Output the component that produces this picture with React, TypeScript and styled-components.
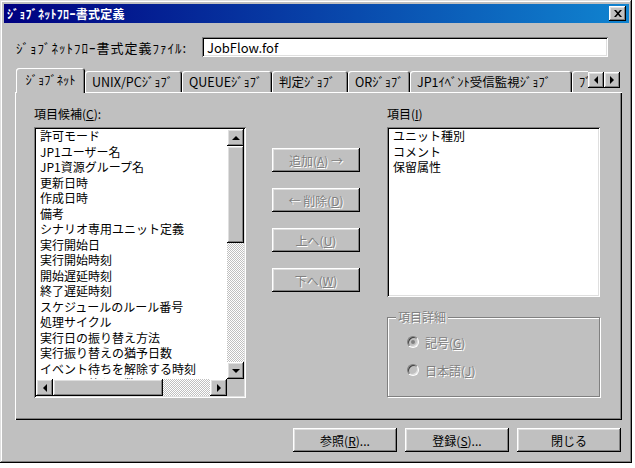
import styled, { createGlobalStyle, css } from "styled-components"

const GlobalStyle = createGlobalStyle`
  html, body {
    margin: 0;
    padding: 0;
    background: #fff;
  }
  body {
    font-family: "Noto Sans CJK JP", "Noto Sans", sans-serif;
    font-size: 12px;
    color: #000;
  }
  #root {
    width: 635px;
    height: 468px;
  }
`

const raised = css`
  background: #c0c0c0;
  box-shadow:
    inset -1px -1px #000,
    inset 1px 1px #fff,
    inset -2px -2px #808080,
    inset 2px 2px #dfdfdf;
`

const sunken = css`
  box-shadow:
    inset 1px 1px #808080,
    inset -1px -1px #fff,
    inset 2px 2px #000,
    inset -2px -2px #dfdfdf;
`

const disabledText = css`
  color: #808080;
  text-shadow: 1px 1px 0 #fff;
`

const Window = styled.div`
  width: 632px;
  height: 463px;
  box-sizing: border-box;
  padding: 4px 3px 3px 4px;
  display: flex;
  flex-direction: column;
  background: #c0c0c0;
  box-shadow:
    inset -1px -1px #000,
    inset 1px 1px #dfdfdf,
    inset -2px -2px #808080,
    inset 2px 2px #fff;
`

const TitleBar = styled.div`
  height: 19px;
  display: flex;
  align-items: center;
  justify-content: space-between;
  padding: 0 3px 0 3px;
  background: linear-gradient(to right, #000080, #1084d0);
  color: #fff;
  font-weight: bold;
  font-size: 12px;
  letter-spacing: 0.3px;
`

const CloseButton = styled.div`
  width: 17px;
  height: 15px;
  display: flex;
  align-items: center;
  justify-content: center;
  ${raised}
`

const FileRow = styled.div`
  display: flex;
  align-items: center;
  margin-top: 14px;
  padding-left: 12px;
`

const FileLabel = styled.span`
  width: 186px;
  font-size: 13px;
  letter-spacing: 1px;
  white-space: nowrap;
`

const TextInput = styled.div`
  width: 406px;
  height: 20px;
  box-sizing: border-box;
  padding: 0 5px;
  display: flex;
  align-items: center;
  background: #fff;
  font-size: 13px;
  ${sunken}
`

const TabStrip = styled.div`
  display: flex;
  height: 25px;
  margin: 11px 0 -1px 12px;
  position: relative;
  z-index: 1;
`

const TabsViewport = styled.div`
  width: 572px;
  display: flex;
  align-items: flex-end;
  overflow: hidden;
`

const Tab = styled.div<{ $w: number; $active?: boolean }>`
  flex: none;
  width: ${(p) => p.$w}px;
  height: ${(p) => (p.$active ? 25 : 21)}px;
  margin-bottom: ${(p) => (p.$active ? 0 : 1)}px;
  box-sizing: border-box;
  display: flex;
  align-items: center;
  justify-content: ${(p) => (p.$active ? "center" : "flex-start")};
  padding: ${(p) => (p.$active ? "0 0 3px" : "0 0 0 7px")};
  white-space: nowrap;
  font-size: 12.5px;
  background: #c0c0c0;
  border-radius: 3px 3px 0 0;
  box-shadow:
    inset 1px 1px #fff,
    inset -1px 0 #000,
    inset -2px 0 #808080;
`

const TabScroll = styled.div`
  display: flex;
  margin-top: 4px;
`

const SmallButton = styled.div<{ $w: number; $h: number }>`
  width: ${(p) => p.$w}px;
  height: ${(p) => p.$h}px;
  flex: none;
  display: flex;
  align-items: center;
  justify-content: center;
  ${raised}
`

const Arrow = styled.span<{ $dir: "up" | "down" | "left" | "right" }>`
  width: 0;
  height: 0;
  border-style: solid;
  ${(p) =>
    p.$dir === "up"
      ? css`border-width: 0 4px 4px 4px; border-color: transparent transparent #000 transparent;`
      : p.$dir === "down"
        ? css`border-width: 4px 4px 0 4px; border-color: #000 transparent transparent transparent;`
        : p.$dir === "left"
          ? css`border-width: 4px 4px 4px 0; border-color: transparent #000 transparent transparent;`
          : css`border-width: 4px 0 4px 4px; border-color: transparent transparent transparent #000;`}
`

const Panel = styled.div`
  width: 607px;
  height: 328px;
  margin-left: 11px;
  box-sizing: border-box;
  padding: 14px 22px 0 19px;
  display: flex;
  box-shadow:
    inset 1px 1px #fff,
    inset -1px -1px #000,
    inset -2px -2px #808080;
`

const Column = styled.div<{ $w: number; $ml?: number }>`
  width: ${(p) => p.$w}px;
  margin-left: ${(p) => p.$ml ?? 0}px;
  display: flex;
  flex-direction: column;
`

const FieldLabel = styled.div`
  height: 16px;
  line-height: 16px;
  margin-bottom: 5px;
  white-space: nowrap;
`

const ListBox = styled.div<{ $h: number; $scroll?: boolean }>`
  height: ${(p) => p.$h}px;
  box-sizing: border-box;
  padding: 2px;
  background: #fff;
  display: grid;
  grid-template-columns: ${(p) => (p.$scroll ? "1fr 17px" : "1fr")};
  grid-template-rows: ${(p) => (p.$scroll ? "1fr 17px" : "1fr")};
  ${sunken}
`

const ListItems = styled.div`
  overflow: hidden;
  padding-left: 4px;
  margin-top: -1px;
`

const ListItem = styled.div`
  line-height: 15.5px;
  white-space: nowrap;
`

const VScroll = styled.div`
  display: flex;
  flex-direction: column;
`

const HScroll = styled.div`
  display: flex;
`

const Track = styled.div<{ $vertical?: boolean }>`
  flex: 1;
  display: flex;
  flex-direction: ${(p) => (p.$vertical ? "column" : "row")};
  background: repeating-conic-gradient(#c0c0c0 0 25%, #fff 0 50%) 0 0 / 2px 2px;
`

const Thumb = styled.div<{ $w?: number; $h?: number }>`
  flex: none;
  width: ${(p) => (p.$w ? `${p.$w}px` : "100%")};
  height: ${(p) => (p.$h ? `${p.$h}px` : "100%")};
  ${raised}
`

const Corner = styled.div`
  background: #c0c0c0;
`

const ActionColumn = styled.div`
  width: 88px;
  margin-left: 26px;
  padding-top: 42px;
  display: flex;
  flex-direction: column;
  gap: 16px;
`

const PushButton = styled.div<{ $w: number; $disabled?: boolean }>`
  width: ${(p) => p.$w}px;
  height: 24px;
  flex: none;
  display: flex;
  align-items: center;
  justify-content: center;
  white-space: nowrap;
  ${raised}
  ${(p) => p.$disabled && disabledText}
`

const GroupBox = styled.div`
  height: 80px;
  margin-top: 20px;
  box-sizing: border-box;
  border: 1px solid #808080;
  box-shadow:
    inset 1px 1px #fff,
    1px 1px #fff;
  display: flex;
  flex-direction: column;
`

const GroupLegend = styled.span`
  align-self: flex-start;
  margin: -9px 0 0 8px;
  padding: 0 2px;
  line-height: 16px;
  background: #c0c0c0;
  ${disabledText}
`

const RadioRow = styled.div<{ $mt: number }>`
  display: flex;
  align-items: center;
  gap: 6px;
  margin: ${(p) => p.$mt}px 0 0 19px;
  height: 16px;
  ${disabledText}
`

const RadioCircle = styled.span<{ $checked?: boolean }>`
  width: 12px;
  height: 12px;
  box-sizing: border-box;
  border-radius: 50%;
  border: 1px solid;
  border-color: #808080 #fff #fff #808080;
  box-shadow:
    inset 1px 1px #404040,
    inset -1px -1px #dfdfdf;
  background: #c0c0c0;
  display: flex;
  align-items: center;
  justify-content: center;
  &::after {
    content: "";
    width: 4px;
    height: 4px;
    border-radius: 50%;
    background: ${(p) => (p.$checked ? "#808080" : "transparent")};
  }
`

const Footer = styled.div`
  display: flex;
  justify-content: flex-end;
  gap: 8px;
  margin-top: 8px;
  padding-right: 8px;
`

const CANDIDATES = [
  "許可モード",
  "JP1ユーザー名",
  "JP1資源グループ名",
  "更新日時",
  "作成日時",
  "備考",
  "シナリオ専用ユニット定義",
  "実行開始日",
  "実行開始時刻",
  "開始遅延時刻",
  "終了遅延時刻",
  "スケジュールのルール番号",
  "処理サイクル",
  "実行日の振り替え方法",
  "実行振り替えの猶予日数",
  "イベント待ちを解除する時刻",
  "イベント待ち回数",
]

const SELECTED = ["ユニット種別", "コメント", "保留属性"]

const TABS = [
  { label: "ｼﾞｮﾌﾞﾈｯﾄ", w: 69, active: true },
  { label: "UNIX/PCｼﾞｮﾌﾞ", w: 97 },
  { label: "QUEUEｼﾞｮﾌﾞ", w: 90 },
  { label: "判定ｼﾞｮﾌﾞ", w: 76 },
  { label: "ORｼﾞｮﾌﾞ", w: 62 },
  { label: "JP1ｲﾍﾞﾝﾄ受信監視ｼﾞｮﾌﾞ", w: 162 },
  { label: "ﾌﾞﾘｯｼﾞ", w: 80 },
]

function App() {
  return (
    <>
      <GlobalStyle />
      <Window>
        <TitleBar>
          <span>ｼﾞｮﾌﾞﾈｯﾄﾌﾛｰ書式定義</span>
          <CloseButton>
            <svg width="8" height="7" viewBox="0 0 8 7">
              <path d="M0 0h2l2 2.2L6 0h2L5 3.5 8 7H6L4 4.8 2 7H0l3-3.5z" fill="#000" />
            </svg>
          </CloseButton>
        </TitleBar>

        <FileRow>
          <FileLabel>ｼﾞｮﾌﾞﾈｯﾄﾌﾛｰ書式定義ﾌｧｲﾙ:</FileLabel>
          <TextInput>JobFlow.fof</TextInput>
        </FileRow>

        <TabStrip>
          <TabsViewport>
            {TABS.map((t) => (
              <Tab key={t.label} $w={t.w} $active={t.active}>
                {t.label}
              </Tab>
            ))}
          </TabsViewport>
          <TabScroll>
            <SmallButton $w={16} $h={16}>
              <Arrow $dir="left" />
            </SmallButton>
            <SmallButton $w={16} $h={16}>
              <Arrow $dir="right" />
            </SmallButton>
          </TabScroll>
        </TabStrip>

        <Panel>
          <Column $w={212}>
            <FieldLabel>
              項目候補(<u>C</u>):
            </FieldLabel>
            <ListBox $h={271} $scroll>
              <ListItems>
                {CANDIDATES.map((c) => (
                  <ListItem key={c}>{c}</ListItem>
                ))}
              </ListItems>
              <VScroll>
                <SmallButton $w={17} $h={17}>
                  <Arrow $dir="up" />
                </SmallButton>
                <Track $vertical>
                  <Thumb $h={97} />
                </Track>
                <SmallButton $w={17} $h={17}>
                  <Arrow $dir="down" />
                </SmallButton>
              </VScroll>
              <HScroll>
                <SmallButton $w={17} $h={17}>
                  <Arrow $dir="left" />
                </SmallButton>
                <Track>
                  <Thumb $w={110} />
                </Track>
                <SmallButton $w={17} $h={17}>
                  <Arrow $dir="right" />
                </SmallButton>
              </HScroll>
              <Corner />
            </ListBox>
          </Column>

          <ActionColumn>
            <PushButton $w={88} $disabled>
              <span>
                追加(<u>A</u>) →
              </span>
            </PushButton>
            <PushButton $w={88} $disabled>
              <span>
                ← 削除(<u>D</u>)
              </span>
            </PushButton>
            <PushButton $w={88} $disabled>
              <span>
                上へ(<u>U</u>)
              </span>
            </PushButton>
            <PushButton $w={88} $disabled>
              <span>
                下へ(<u>W</u>)
              </span>
            </PushButton>
          </ActionColumn>

          <Column $w={213} $ml={27}>
            <FieldLabel>
              項目(<u>I</u>)
            </FieldLabel>
            <ListBox $h={170}>
              <ListItems>
                {SELECTED.map((s) => (
                  <ListItem key={s}>{s}</ListItem>
                ))}
              </ListItems>
            </ListBox>
            <GroupBox>
              <GroupLegend>項目詳細</GroupLegend>
              <RadioRow $mt={9}>
                <RadioCircle $checked />
                <span>
                  記号(<u>G</u>)
                </span>
              </RadioRow>
              <RadioRow $mt={12}>
                <RadioCircle />
                <span>
                  日本語(<u>J</u>)
                </span>
              </RadioRow>
            </GroupBox>
          </Column>
        </Panel>

        <Footer>
          <PushButton $w={104}>
            <span>
              参照(<u>R</u>)...
            </span>
          </PushButton>
          <PushButton $w={104}>
            <span>
              登録(<u>S</u>)...
            </span>
          </PushButton>
          <PushButton $w={104}>閉じる</PushButton>
        </Footer>
      </Window>
    </>
  )
}

export default App
